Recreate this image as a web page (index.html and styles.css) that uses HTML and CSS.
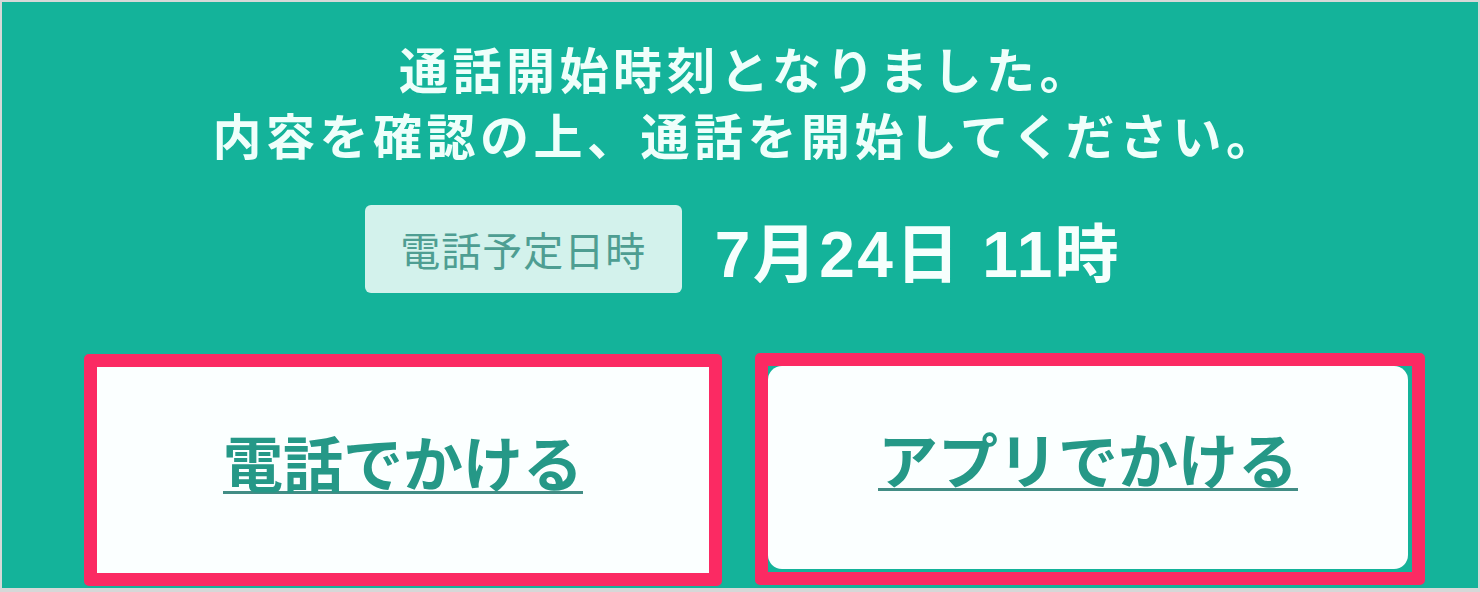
FILE: index.html
```html
<!DOCTYPE html>
<html lang="ja">
<head>
<meta charset="utf-8">
<title>通話開始</title>
<link rel="stylesheet" href="styles.css">
</head>
<body>
<div class="frame">
  <div class="screen">
    <p class="message">通話開始時刻となりました。<br>内容を確認の上、通話を開始してください。</p>
    <div class="schedule">
      <span class="label">電話予定日時</span>
      <span class="datetime">7月24日 11時</span>
    </div>
    <div class="actions">
      <div class="highlight highlight-left">
        <a class="card" href="#">電話でかける</a>
      </div>
      <div class="highlight highlight-right">
        <a class="card card-round" href="#">アプリでかける</a>
      </div>
    </div>
  </div>
</div>
</body>
</html>
```

FILE: styles.css
```css
html, body {
  margin: 0;
  padding: 0;
}

body {
  width: 1480px;
  height: 592px;
  overflow: hidden;
  font-family: "Noto Sans CJK JP", "Noto Sans", sans-serif;
}

.frame {
  box-sizing: border-box;
  width: 1480px;
  height: 592px;
  border: 2px solid #d6d8d8;
  border-bottom-width: 4px;
  background: #14b39a;
}

.screen {
  display: flex;
  flex-direction: column;
  align-items: center;
  padding-top: 33px;
}

.message {
  margin: 0;
  text-align: center;
  color: #effffb;
  font-size: 49px;
  font-weight: 700;
  line-height: 66px;
  letter-spacing: 4.5px;
  padding-left: 12px;
}

.schedule {
  display: flex;
  align-items: center;
  gap: 33px;
  margin-top: 36px;
  margin-left: 6px;
}

.label {
  display: flex;
  align-items: center;
  justify-content: center;
  box-sizing: border-box;
  width: 317px;
  height: 88px;
  background: #d3f2ec;
  border-radius: 6px;
  color: #4e9e92;
  font-size: 40px;
  font-weight: 400;
  letter-spacing: 1px;
}

.datetime {
  color: #f6fffd;
  font-family: "Liberation Sans", "Noto Sans CJK JP", sans-serif;
  font-size: 64px;
  font-weight: 700;
  letter-spacing: 2.5px;
}

.actions {
  display: flex;
  align-self: stretch;
  gap: 33px;
  margin-top: 59px;
  padding-left: 82px;
}

.highlight {
  box-sizing: border-box;
  height: 232px;
  border: 13px solid #fb2a63;
  border-radius: 5px;
  display: flex;
}

.highlight-left {
  width: 638px;
}

.highlight-right {
  width: 670px;
  margin-top: -1px;
  padding: 0 4px 3px 0;
}

.card {
  flex: 1;
  display: flex;
  align-items: center;
  justify-content: center;
  padding-bottom: 20px;
  background: #fbffff;
  color: #259887;
  font-size: 60px;
  font-weight: 700;
  text-decoration: underline;
  text-decoration-color: #428d85;
  text-decoration-thickness: 3px;
  text-underline-offset: 4px;
}

.card-round {
  border-radius: 14px;
}
```
